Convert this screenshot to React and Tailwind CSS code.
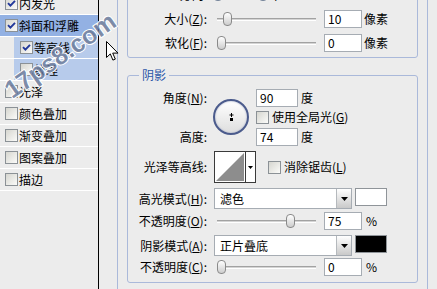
import React from "react";

const LIST = [
  { label: "内发光", checked: true },
  { label: "斜面和浮雕", checked: true, active: true },
  { label: "等高线", checked: true, sub: true },
  { label: "纹理", sub: true },
  { label: "光泽" },
  { label: "颜色叠加" },
  { label: "渐变叠加" },
  { label: "图案叠加" },
  { label: "描边" },
];

function Check({ checked }) {
  return (
    <span className="flex h-[13px] w-[13px] shrink-0 items-center justify-center border border-[#8b9196] bg-linear-to-br from-[#d6d6d0] to-[#fbfbf9]">
      {checked && (
        <svg width="9" height="9" viewBox="0 0 9 9">
          <path d="M1 4.2 3.4 6.7 8 1.8" fill="none" stroke="#22389a" strokeWidth="1.9" />
        </svg>
      )}
    </span>
  );
}

function Radio({ on }) {
  return (
    <span className="flex h-[12px] w-[12px] shrink-0 items-center justify-center rounded-full border border-[#6f7f96] bg-linear-to-br from-[#dcdcd6] to-white">
      {on && <span className="h-[6px] w-[6px] rounded-full bg-[#2b3e78]" />}
    </span>
  );
}

function Tri() {
  return (
    <svg width="7" height="4" viewBox="0 0 7 4">
      <path d="M0 0h7L3.5 4z" fill="#000" />
    </svg>
  );
}

function Label({ children }) {
  return <span className="w-[79px] shrink-0 text-right">{children}</span>;
}

function Slider({ thumb }) {
  return (
    <div className="relative ml-[10px] flex h-[14px] w-[99px] shrink-0 items-center">
      <div className="h-[3px] w-full border-t border-b border-t-[#a2a2a2] border-b-white bg-[#d4d4d4]" />
      <div className={`absolute top-0 h-[14px] w-[9px] rounded-[4px] border border-[#8a8a8a] bg-linear-to-b from-white to-[#cdcdcd] ${thumb}`} />
    </div>
  );
}

function Field({ value, className = "" }) {
  return (
    <span className={`flex h-[18px] shrink-0 items-center border border-[#a6acb3] bg-white pl-[3px] ${className}`}>
      {value}
    </span>
  );
}

function Select({ value }) {
  return (
    <div className="ml-[7px] flex h-[21px] w-[138px] shrink-0 border border-[#a6acb3] bg-white">
      <span className="flex flex-1 items-center pl-[5px]">{value}</span>
      <span className="flex w-[15px] items-center justify-center border-l border-[#b5b9bd] bg-linear-to-b from-white to-[#c9c9c9]">
        <Tri />
      </span>
    </div>
  );
}

export default function App() {
  return (
    <div className="relative flex h-[289px] w-[437px] overflow-hidden bg-[#ececec] font-['Noto_Sans_CJK_SC','Noto_Sans',sans-serif] text-[12px] leading-none text-black">
      {/* style list */}
      <div className="w-[99px] shrink-0 border-r border-black">
        <div className="-mt-[7px]">
          {LIST.map((it) => (
            <div
              key={it.label}
              className={`flex h-[22px] items-center border-b border-white ${it.active ? "bg-[#93b1e3]" : ""}`}
            >
              {it.sub ? (
                <div className="ml-[14px] flex h-full flex-1 items-center gap-[1px] bg-[#b7cbeb] pl-[6px]">
                  <Check checked={it.checked} />
                  <span>{it.label}</span>
                </div>
              ) : (
                <div className="flex items-center gap-[1px] pl-[5px]">
                  <Check checked={it.checked} />
                  <span>{it.label}</span>
                </div>
              )}
            </div>
          ))}
        </div>
      </div>

      <div className="w-[18px] shrink-0" />

      {/* bevel & emboss group */}
      <div className="w-[311px] shrink-0 border-x border-[#aab9da] px-[9px]">
        {/* structure */}
        <div className="-mt-[25px] rounded-[3px] border border-[#aab9da] pt-[7px] pb-[2px]">
          <div className="flex h-[24px] items-center">
            <Label>方向:</Label>
            <span className="ml-[5px]"><Radio on /></span>
            <span className="ml-[1px]">上</span>
            <span className="ml-[20px]"><Radio /></span>
            <span className="ml-[1px]">下</span>
          </div>
          <div className="flex h-[24px] items-center">
            <Label>大小(<u>Z</u>):</Label>
            <Slider thumb="left-[6px]" />
            <Field value="10" className="ml-[8px] w-[38px]" />
            <span className="ml-[2px]">像素</span>
          </div>
          <div className="flex h-[24px] items-center">
            <Label>软化(<u>F</u>):</Label>
            <Slider thumb="left-0" />
            <Field value="0" className="ml-[8px] w-[38px]" />
            <span className="ml-[2px]">像素</span>
          </div>
        </div>

        {/* shading */}
        <div className="relative mt-[17px] rounded-[3px] border border-[#aab9da] pt-[12px] pb-[5px]">
          <span className="absolute -top-[7px] left-[11px] bg-[#ececec] px-[3px] text-[#2d57a8]">阴影</span>

          <div className="grid grid-cols-[79px_49px_1fr] grid-rows-[19px_20px_19px] items-center">
            <Label>角度(<u>N</u>):</Label>
            <div className="row-span-3 flex items-center">
              <div className="relative ml-[6px] flex h-[36px] w-[36px] items-center justify-center rounded-full border-2 border-[#4b5b8c] bg-linear-to-b from-white to-[#dedede] shadow-[inset_0_0_2px_#9aa4c0]">
                <svg width="7" height="9" viewBox="0 0 7 9">
                  <path d="M3.5 0v4M1.5 2h4" stroke="#000" strokeWidth="1" />
                  <rect x="2" y="5" width="3" height="3" fill="#000" />
                </svg>
              </div>
            </div>
            <div className="flex items-center">
              <Field value="90" className="w-[42px]" />
              <span className="ml-[3px]">度</span>
            </div>
            <span />
            <div className="flex items-center gap-[3px]">
              <Check />
              <span>使用全局光(<u>G</u>)</span>
            </div>
            <Label>高度:</Label>
            <div className="flex items-center">
              <Field value="74" className="w-[42px]" />
              <span className="ml-[3px]">度</span>
            </div>
          </div>

          <div className="mt-[5px] flex h-[32px] items-center">
            <Label>光泽等高线:</Label>
            <div className="ml-[7px] flex h-[32px] w-[42px] shrink-0 border border-[#3a3a3a] bg-white">
              <div className="h-full w-[31px] border-r border-[#3a3a3a] p-[1px]">
                <svg className="h-full w-full" viewBox="0 0 28 28" preserveAspectRatio="none">
                  <path d="M0 28 28 0v28z" fill="#8d8d8d" />
                </svg>
              </div>
              <div className="flex flex-1 items-center justify-center">
                <svg width="5" height="3" viewBox="0 0 5 3">
                  <path d="M0 0h5L2.5 3z" fill="#000" />
                </svg>
              </div>
            </div>
            <span className="ml-[12px]"><Check /></span>
            <span className="ml-[3px]">消除锯齿(<u>L</u>)</span>
          </div>

          <div className="mt-[5px] flex h-[21px] items-start">
            <span className="flex h-[21px] items-center"><Label>高光模式(<u>H</u>):</Label></span>
            <Select value="滤色" />
            <span className="ml-[3px] h-[18px] w-[32px] border border-[#8f9499] bg-white" />
          </div>

          <div className="mt-[2px] flex h-[20px] items-center">
            <Label>不透明度(<u>O</u>):</Label>
            <Slider thumb="left-[69px]" />
            <Field value="75" className="ml-[8px] w-[38px]" />
            <span className="ml-[4px]">%</span>
          </div>

          <div className="mt-[4px] flex h-[21px] items-start">
            <span className="flex h-[21px] items-center"><Label>阴影模式(<u>A</u>):</Label></span>
            <Select value="正片叠底" />
            <span className="ml-[3px] h-[18px] w-[32px] border border-[#8f9499] bg-black" />
          </div>

          <div className="mt-[1px] flex h-[20px] items-center">
            <Label>不透明度(<u>C</u>):</Label>
            <Slider thumb="left-0" />
            <Field value="0" className="ml-[8px] w-[38px]" />
            <span className="ml-[4px]">%</span>
          </div>
        </div>
      </div>

      {/* watermark */}
      <span className="pointer-events-none absolute left-[7px] top-[79px] origin-left -rotate-[35deg] font-['Liberation_Sans',sans-serif] text-[25px] font-bold leading-[26px] text-[#5d6f93]/80 [-webkit-text-stroke:2px_#ffffff] [paint-order:stroke_fill]">
        17ps8.com
      </span>

      {/* pointer */}
      <svg className="pointer-events-none absolute left-[106px] top-[41px]" width="13" height="21" viewBox="0 0 13 21">
        <path d="M.5.5v16l3.8-3.6 2.6 6.2 2.4-1-2.6-6h5.3z" fill="#fff" stroke="#000" strokeWidth="1" />
      </svg>
    </div>
  );
}
